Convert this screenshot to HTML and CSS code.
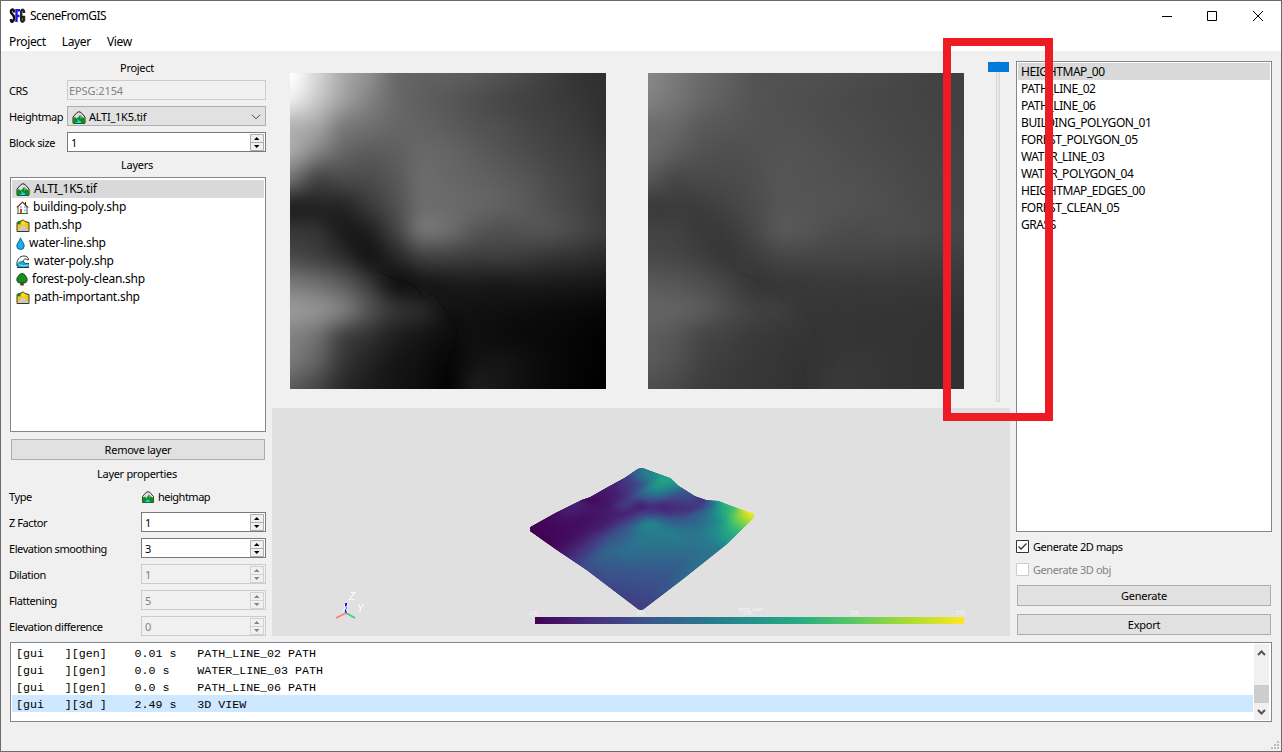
FILE: index.html
```html
<!DOCTYPE html>
<html lang="en">
<head>
<meta charset="utf-8">
<title>SceneFromGIS</title>
<link rel="stylesheet" href="styles.css">
</head>
<body>
<svg class="defs" width="0" height="0">
  <symbol id="mountain" viewBox="0 0 14 13">
    <path d="M1 6 5 1.500 7 .7 9 1.500 13 6v6H1z" fill="#ddd" stroke="#222" stroke-width="1"/>
    <path d="M1 7.500 3 6l2 1.500L8 4l2 2 3 1.500V12.500H1z" fill="#128a25"/>
    <path d="M8 4.500 10 6.500 8 8z" fill="#4fc530"/>
    <path d="M3 12.500 6 10 5 8l4 2.500 0 2z" fill="#27c9ff"/>
    <path d="M1 12.500h12" stroke="#16661f"/>
  </symbol>
  <symbol id="house" viewBox="0 0 13 13">
    <path d="M2 6v6.500h9V6L6.500 1.500z" fill="#fff" stroke="#555"/>
    <path d="M.8 6.500 6.500 1 12.200 6.500" fill="none" stroke="#a33a35" stroke-width="1.200"/>
    <path d="M9.500 1v3" stroke="#222"/>
    <path d="M4 8h2v4.500H4z" fill="#d84035"/>
    <path d="M4 5h2v2H4zM8 5h2v2H8zM8 8.500h2v2H8z" fill="#80d7ef"/>
    <path d="M1 12.500h3M7 12.500h5" stroke="#297b28"/>
  </symbol>
  <symbol id="road" viewBox="0 0 14 13">
    <path d="M1 3.500 5 2 7 .8 9 2.500 13 3.500v9H1z" fill="#f5c51b" stroke="#3a3927"/>
    <path d="M1 5 2 2.500 5 3 4 5.500z" fill="#178524"/>
    <path d="M5 4 7 1.500 10 4 8 6z" fill="#ffe100"/>
    <path d="M1.500 12 6 6.500h2l5 5.500z" fill="#c9c9c5"/>
  </symbol>
  <symbol id="drop" viewBox="0 0 9 13">
    <path d="M4.500.8C4 3.500.8 6 .8 9a3.700 3.500 0 0 0 7.400 0C8.200 6 5 3.500 4.500.8z" fill="#16aff0" stroke="#17627e"/>
  </symbol>
  <symbol id="wave" viewBox="0 0 14 13">
    <path d="M1 11C0 5 4 .8 8 1c3 0 4 2 4.500 4-3-2-5-1-5 1.500 1 2.500 3 2.500 5.500 2v4H2z" fill="#fff"/>
    <path d="M1 10.500C1 8 4 5 7.500 6c0 3 3 3 5.500 2.500v4H1z" fill="#16a8d4"/>
    <path d="M1 11C0 5 4 .8 8 1c3 0 4.500 1.500 4.500 4C9 3 7 4.500 7.500 6.500c.5 2 3 2.500 5.500 2M1 12.500h12" fill="none" stroke="#333"/>
    <path d="M3 9.500l4 1.500 5-1" fill="none" stroke="#9be2f5"/>
  </symbol>
  <symbol id="tree" viewBox="0 0 12 13">
    <path d="M5 8h2l1 4.500H4z" fill="#6b351d"/>
    <path d="M6 .7C3.500.7 3 2 2.500 3 .5 4.500.3 8 2 9.500c2 .7 6 .7 8 0C11.700 8 11.500 4.500 9.500 3 9 2 8.500.7 6 .7z" fill="#14911c" stroke="#173f17"/>
  </symbol>
  <symbol id="updown" viewBox="0 0 14 17">
    <path d="M.5.500h13v16H.5zM.5 8.500h13" fill="none" class="spin-frame"/>
    <path d="M4 6h5.500L6.750 3zM4 11h5.500l-2.750 3z" class="spin-arrow"/>
  </symbol>
</svg>

<div class="window">
  <header class="titlebar">
    <svg class="logo" width="17" height="16" viewBox="0 0 17 16">
      <g fill="none" stroke-width="2.400">
        <path d="M5 4.500V2.500Q3 .5 2 2.500v2l3 4v3Q3.500 15 2 13v-2" stroke="#111"/>
        <path d="M7.500 14V2.200h3.500M7 8h3.500" stroke="#1919ee"/>
        <path d="M15 5V3Q13.500.5 12.200 3v9.500Q13.500 15 15 12.500V9h-2" stroke="#222"/>
      </g>
    </svg>
    <span class="title">SceneFromGIS</span>
    <svg class="controls" width="106" height="12" viewBox="0 0 106 12" fill="none" stroke="#000">
      <path d="M1 6.500h10M46.500 1.500h9v9h-9zM92 1l10 10M102 1 92 11"/>
    </svg>
  </header>
  <nav class="menubar"><span>Project</span><span>Layer</span><span>View</span></nav>

  <main class="body">
    <section class="left">
      <h2>Project</h2>
      <div class="form narrow">
        <label>CRS</label><div class="field crs disabled"><span>EPSG:2154</span></div>
        <label>Heightmap</label>
        <div class="field combo"><svg width="14" height="13"><use href="#mountain"/></svg><span class="ui">ALTI_1K5.tif</span>
          <svg class="chev" width="10" height="6" viewBox="0 0 10 6"><path d="M1 .8 5 4.800 9 .8" fill="none" stroke="#444"/></svg></div>
        <label>Block size</label><div class="field spin"><span>1</span><svg width="14" height="17"><use href="#updown"/></svg></div>
      </div>
      <h2 class="layers-title">Layers</h2>
      <ul class="list layers">
        <li class="selected"><svg width="14" height="13"><use href="#mountain"/></svg>ALTI_1K5.tif</li>
        <li><svg width="13" height="13"><use href="#house"/></svg>building-poly.shp</li>
        <li><svg width="14" height="13"><use href="#road"/></svg>path.shp</li>
        <li><svg width="9" height="13"><use href="#drop"/></svg>water-line.shp</li>
        <li><svg width="14" height="13"><use href="#wave"/></svg>water-poly.shp</li>
        <li><svg width="12" height="13"><use href="#tree"/></svg>forest-poly-clean.shp</li>
        <li><svg width="14" height="13"><use href="#road"/></svg>path-important.shp</li>
      </ul>
      <div class="button remove">Remove layer</div>
      <h2 class="props-title">Layer properties</h2>
      <div class="form wide">
        <label>Type</label><div class="type"><svg width="14" height="12" viewBox="0 0 14 13"><use href="#mountain"/></svg>heightmap</div>
        <label>Z Factor</label><div class="field spin"><span>1</span><svg width="14" height="17"><use href="#updown"/></svg></div>
        <label>Elevation smoothing</label><div class="field spin"><span>3</span><svg width="14" height="17"><use href="#updown"/></svg></div>
        <label>Dilation</label><div class="field spin disabled"><span>1</span><svg width="14" height="17"><use href="#updown"/></svg></div>
        <label>Flattening</label><div class="field spin disabled"><span>5</span><svg width="14" height="17"><use href="#updown"/></svg></div>
        <label>Elevation difference</label><div class="field spin disabled"><span>0</span><svg width="14" height="17"><use href="#updown"/></svg></div>
      </div>
    </section>

    <section class="center">
      <div class="maps">
        <canvas id="source" width="316" height="316"></canvas>
        <canvas id="result" width="316" height="316"></canvas>
        <div class="slider"><div class="groove"></div><div class="handle"></div></div>
      </div>
      <div class="view3d">
        <canvas id="terrain" width="738" height="228"></canvas>
        <svg class="overlay" width="738" height="228" viewBox="272 408 738 228">
          <defs><linearGradient id="viridis"><stop offset="0" stop-color="#440154"/><stop offset=".125" stop-color="#472d7b"/><stop offset=".25" stop-color="#3b528b"/><stop offset=".375" stop-color="#2c728e"/><stop offset=".5" stop-color="#21918c"/><stop offset=".625" stop-color="#28ae80"/><stop offset=".75" stop-color="#5ec962"/><stop offset=".875" stop-color="#addc30"/><stop offset="1" stop-color="#fde725"/></linearGradient></defs>
          <rect x="535" y="617" width="429" height="7" fill="url(#viridis)"/>
          <g class="scale"><text x="534" y="615">100.</text><text x="641" y="615">162.</text><text x="748" y="615">185.</text><text x="855" y="615">228.</text><text x="961" y="615">270.</text><text x="751" y="611">point_color</text></g>
          <g fill="none" stroke-width="1.700"><path d="M346 613v-10" stroke="#1717f0" stroke-width="2"/><path d="M346 613l-10 5" stroke="#ff8268"/><path d="M346 613l9 5" stroke="#3bcf82"/></g>
          <g class="axes"><text x="349" y="600">Z</text><text x="342" y="612">X</text><text x="357" y="612">Y</text></g>
        </svg>
      </div>
    </section>

    <section class="right">
      <ul class="list maps-list">
        <li class="selected">HEIGHTMAP_00</li><li>PATH_LINE_02</li><li>PATH_LINE_06</li><li>BUILDING_POLYGON_01</li><li>FOREST_POLYGON_05</li><li>WATER_LINE_03</li><li>WATER_POLYGON_04</li><li>HEIGHTMAP_EDGES_00</li><li>FOREST_CLEAN_05</li><li>GRASS</li>
      </ul>
      <div class="check"><svg width="13" height="13" viewBox="0 0 13 13"><path d="M.5.500h12v12H.5z" fill="#fff" stroke="#333"/><path d="M2.500 6.500 5 9l5.500-5.500" fill="none" stroke="#333" stroke-width="1.300"/></svg><span>Generate 2D maps</span></div>
      <div class="check off"><svg width="13" height="13" viewBox="0 0 13 13"><path d="M.5.500h12v12H.5z" fill="#fff" stroke="#ccc"/></svg><span>Generate 3D obj</span></div>
      <div class="button generate">Generate</div>
      <div class="button">Export</div>
    </section>
  </main>

  <footer class="log">
    <div class="lines"><pre>[gui   ][gen]    0.01 s   PATH_LINE_02 PATH</pre><pre>[gui   ][gen]    0.0 s    WATER_LINE_03 PATH</pre><pre>[gui   ][gen]    0.0 s    PATH_LINE_06 PATH</pre><pre class="current">[gui   ][3d ]    2.49 s   3D VIEW</pre></div>
    <svg class="scroll" width="15" height="76" viewBox="0 0 15 76"><path d="M0 0h15v76H0z" fill="#f0f0f0"/><path d="M0 41h15v18H0z" fill="#cdcdcd"/><path d="M4 11l3.500-3.500L11 11M4 66l3.500 3.500L11 66" fill="none" stroke="#555" stroke-width="2"/></svg>
  </footer>
  <div class="highlight"></div>
  <svg class="grip" width="9" height="9" viewBox="0 0 9 9"><path d="M6 0h2v2H6zM3 3h2v2H3zM6 3h2v2H6zM0 6h2v2H0zM3 6h2v2H3zM6 6h2v2H6z" fill="#bdbdbd"/></svg>
</div>
<script src="terrain.js"></script>
</body>
</html>
```
FILE: styles.css
```css
* { box-sizing: border-box; }
body { margin: 0; background: #f0f0f0; color: #000; font: 11px/14px "Noto Sans", sans-serif; letter-spacing: -.42px; }
.defs { position: absolute; }
svg, canvas { display: block; flex: none; }
.window { position: relative; width: 1282px; height: 752px; border: 1px solid #6b6b6b; background: #f0f0f0; overflow: hidden; }
.titlebar { display: flex; align-items: center; height: 29px; padding-left: 8px; background: #fff; font-size: 12px; letter-spacing: -.5px; }
.title { margin-left: 4px; letter-spacing: -.5px; }
.controls { margin: 0 14px 0 auto; }
.menubar { display: flex; gap: 16px; height: 21px; padding: 1px 8px 0; background: #fff; font-size: 12px; line-height: 22px; letter-spacing: -.35px; }
.body { display: grid; grid-template-columns: 256px 738px 256px; column-gap: 6px; height: 585px; padding-left: 9px; }
.left { padding-top: 10px; }
h2 { margin: 0; height: 14px; font: 11px/14px "Noto Sans", sans-serif; text-align: center; padding-right: 2px; letter-spacing: -.3px; }
.form { display: grid; align-items: center; gap: 6px 0; grid-auto-rows: 20px; }
.form label { padding-top: 2px; margin-left: -1px; white-space: nowrap; }
.narrow { grid-template-columns: 57px 199px; margin-top: 5px; }
.wide { grid-template-columns: 131px 125px; margin-top: 5px; }
.field { display: flex; align-items: center; height: 20px; padding: 1px 1px 0 3px; border: 1px solid #7a7a7a; background: #fff; }
.field.disabled { border-color: #ccc; background: #f0f0f0; color: #838383; }
.field.crs { padding: 2px 1px 0 1px; letter-spacing: -.1px; }
.field.combo { border-color: #adadad; background: #e1e1e1; padding: 2px 1px 0 4px; }
.ui { margin-left: 3px; letter-spacing: -.25px; }
.chev { margin-left: auto; margin-right: 3px; }
.spin { justify-content: space-between; padding-top: 0; }
.spin span { padding-top: 2px; }
.spin-frame { stroke: #adadad; fill: #f0f0f0; }
.spin-arrow { fill: #000; }
.disabled svg { opacity: .45; }
.type { display: flex; gap: 3px; align-items: center; padding-top: 1px; letter-spacing: -.5px; }
.layers-title { margin-top: 6px; }
.props-title { margin-top: 7px; }
.list { margin: 0; padding: 1px; list-style: none; border: 1px solid #828790; background: #fff; font-size: 12px; letter-spacing: -.25px; }
.layers { height: 255px; margin-top: 5px; padding-top: 2px; }
.layers li { display: flex; align-items: center; gap: 4px; height: 18px; padding-left: 4px; }
.selected { background: #d9d9d9; }
.button { height: 21px; margin: 0 1px; border: 1px solid #adadad; background: #e1e1e1; text-align: center; line-height: 20px; letter-spacing: -.25px; }
.remove { margin-top: 7px; }
.maps { display: flex; align-items: flex-start; height: 357px; padding: 22px 0 0 18px; gap: 42px; }
.slider { position: relative; width: 21px; height: 341px; margin: -12px 0 0 -18px; }
.groove { width: 4px; height: 341px; margin-left: 8px; border: 1px solid #d6d6d6; background: #e7eaea; }
.handle { position: absolute; left: 0; top: 1px; width: 21px; height: 10px; background: #007ad9; }
.view3d { position: relative; height: 228px; background: #e0e0e0; }
.overlay { position: absolute; inset: 0; letter-spacing: 0; }
.scale { font: 5px "Liberation Sans", sans-serif; fill: #f5f5f5; text-anchor: middle; }
.axes { font: italic 10px "Liberation Sans", sans-serif; fill: #fff; }
.right { padding-top: 10px; }
.maps-list { height: 471px; letter-spacing: -.42px; }
.maps-list li { height: 17px; padding-left: 3px; line-height: 18px; }
.check { display: flex; align-items: center; gap: 4px; height: 13px; margin-top: 8px; }
.check + .check { margin-top: 10px; }
.off { color: #838383; }
.generate { margin: 9px 1px 8px; }
.log { display: flex; height: 80px; width: 1262px; margin: 6px 0 0 9px; padding: 1px 2px 1px 1px; border: 1px solid #828790; background: #fff; }
.lines { width: 1241px; letter-spacing: -.02px; }
.lines pre { margin: 0; height: 17px; padding: 1px 0 0 4px; font: 11.670px/18px "Liberation Mono", monospace; }
.lines .current { background: #cde8ff; }
.scroll { margin-left: auto; }
.highlight { position: absolute; left: 942px; top: 37px; width: 110px; height: 383px; border: 8px solid #ed1c24; }
.grip { position: absolute; right: 1px; bottom: 1px; }
```
FILE: terrain.js
```js
// Elevation samples, 13 x 13, 0 = lowest and 255 = highest.
const H = [
  [255,215,170,142,106,98,95,90,82,72,62,52,48],
  [235,200,160,130,106,95,88,80,72,66,60,54,48],
  [180,165,125,112,102,98,92,84,78,70,64,58,50],
  [165,130,102,92,95,103,100,92,84,76,68,62,55],
  [110,72,74,76,88,106,103,98,92,84,74,66,58],
  [42,45,42,58,80,106,106,102,96,88,78,68,58],
  [55,52,36,36,66,110,106,88,80,82,80,70,60],
  [75,65,48,30,40,62,64,60,60,57,52,48,42],
  [120,110,90,60,26,28,28,28,26,28,26,25,22],
  [150,142,120,80,50,42,24,18,16,14,12,10,8],
  [130,112,70,50,32,22,16,16,12,10,8,5,2],
  [118,95,55,35,22,16,10,18,20,14,8,4,1],
  [90,70,42,28,20,14,6,26,22,14,8,3,0]
];
const clamp = (v, a, b) => Math.max(a, Math.min(b, v));
const cubic = (a, b, c, d, t) => b + .5 * t * (c - a + t * (2 * a - 5 * b + 4 * c - d + t * (3 * (b - c) + d - a)));
function height(u, v) {
  const x = u * 12, y = v * 12, i = Math.min(11, Math.floor(x)), j = Math.min(11, Math.floor(y));
  const rows = [-1, 0, 1, 2].map(r => {
    const row = H[clamp(j + r, 0, 12)], g = k => row[clamp(k, 0, 12)];
    return cubic(g(i - 1), g(i), g(i + 1), g(i + 2), x - i);
  });
  return clamp(cubic(...rows, y - j), 0, 255);
}

// Stream bed, in map pixels.
const river = [[0,139],[20,137],[42,145],[60,160],[78,180],[88,198],[108,207],[124,212],[134,225],[143,220],[158,241],[167,257],[165,275],[159,286],[155,303],[157,316]];
function drawMap(id, scale, base) {
  const ctx = document.getElementById(id).getContext('2d');
  const img = ctx.createImageData(316, 316);
  for (let y = 0; y < 316; y++) for (let x = 0; x < 316; x++) {
    const g = height(x / 315, y / 315) * scale + base, p = (y * 316 + x) * 4;
    img.data[p] = img.data[p + 1] = img.data[p + 2] = g;
    img.data[p + 3] = 255;
  }
  ctx.putImageData(img, 0, 0);
  ctx.lineJoin = 'round';
  [[22, .22, 8, 0], [1.5, .22, .7, 5]].forEach(([w, a, b, from]) => {
    ctx.filter = `blur(${b}px)`;
    ctx.lineWidth = w;
    ctx.strokeStyle = `rgba(${base},${base},${base},${a})`;
    ctx.beginPath();
    river.slice(from).forEach(([x, y]) => ctx.lineTo(x, y));
    ctx.stroke();
  });
}
drawMap('source', 1, 0);
drawMap('result', .34, 48);

const V = [[68,1,84],[71,45,123],[59,82,139],[44,114,142],[33,145,140],[40,174,128],[94,201,98],[173,220,48],[253,231,37]];
function viridis(t) {
  const x = t * 8, i = Math.min(7, Math.floor(x));
  return V[i].map((c, k) => Math.round(c + (V[i + 1][k] - c) * (x - i)));
}
// Outline of the surface, as four polylines in view pixels.
const pt = ([x, y]) => [x / 3 + 238, y / 3 + 47];
const topLeft = [[393,40],[383,42],[345,68],[290,98],[240,127],[215,135],[135,175],[60,217]].map(pt);
const topRight = [[732,176],[670,155],[625,138],[590,136],[555,124],[505,92],[482,70],[440,55],[403,41],[393,40]].map(pt);
const lowRight = [[732,176],[731,188],[650,268],[520,371],[400,463],[393,464]].map(pt);
const lowLeft = [[393,464],[385,463],[230,345],[135,281],[60,228],[60,217]].map(pt);
function along(line, t) {
  const seg = line.slice(1).map((p, i) => Math.hypot(p[0] - line[i][0], p[1] - line[i][1]));
  let d = t * seg.reduce((a, b) => a + b, 0), i = 0;
  while (i < seg.length - 1 && d > seg[i]) d -= seg[i++];
  const f = Math.min(1, d / seg[i]);
  return [0, 1].map(k => line[i][k] + (line[i + 1][k] - line[i][k]) * f);
}
function project(u, v) {
  const a = along(lowRight, u), b = along(topLeft, u), c = along(topRight, v), d = along(lowLeft, v);
  const p = [lowRight[0], lowLeft[0], topLeft[0], topLeft[topLeft.length - 1]];
  return [0, 1].map(k => (1 - v) * a[k] + v * b[k] + (1 - u) * c[k] + u * d[k]
    - (1 - u) * (1 - v) * p[0][k] - u * (1 - v) * p[1][k] - (1 - u) * v * p[2][k] - u * v * p[3][k]
    - (k ? 5 * Math.sin(Math.PI * u) * Math.sin(Math.PI * v) : 0));
}
const tc = document.getElementById('terrain').getContext('2d');
// Clip to the outline so the overlapping facets keep a crisp border.
tc.beginPath();
[...lowRight, ...lowLeft, ...[...topLeft].reverse(), ...[...topRight].reverse()].forEach(([x, y]) => tc.lineTo(x, y));
tc.clip();
const N = 80;
for (let j = N - 1; j >= 0; j--) for (let i = 0; i < N; i++) {
  const q = [[i, j], [i + 1, j], [i + 1, j + 1], [i, j + 1]].map(([a, b]) => project(a / N, b / N));
  const color = `rgb(${viridis(height((i + .5) / N, (j + .5) / N) / 255)})`;
  tc.fillStyle = tc.strokeStyle = color;
  tc.lineWidth = 2;
  tc.lineJoin = 'round';
  tc.beginPath();
  q.forEach(([x, y]) => tc.lineTo(x, y));
  tc.closePath();
  tc.fill();
  tc.stroke();
}
```
